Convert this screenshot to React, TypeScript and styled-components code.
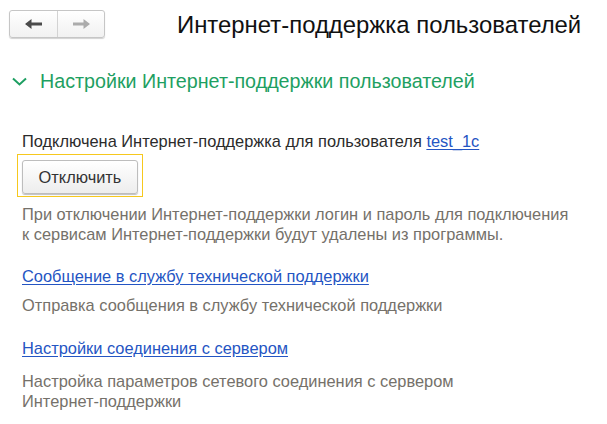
import React from "react";
import styled, { createGlobalStyle } from "styled-components";

const GlobalStyle = createGlobalStyle`
  html, body { margin: 0; padding: 0; background: #ffffff; }
  body { font-family: "Liberation Sans", Arial, sans-serif; color: #333333; }
`;

const Page = styled.div`
  width: 607px;
  height: 424px;
  box-sizing: border-box;
  padding: 10px 0 0 0;
  display: flex;
  flex-direction: column;
  overflow: hidden;
`;

const TopBar = styled.div`
  display: flex;
  align-items: center;
  padding-left: 9px;
  height: 28px;
`;

const NavGroup = styled.div`
  display: flex;
  height: 28px;
  box-sizing: border-box;
  border: 1px solid #c6c6c6;
  border-radius: 3px;
  background: linear-gradient(#ffffff, #f1f1f1);
  box-shadow: 0 1px 1px rgba(0, 0, 0, 0.18);
  overflow: hidden;
`;

const NavButton = styled.button<{ $divider?: boolean }>`
  width: 47px;
  height: 100%;
  border: none;
  padding: 0;
  margin: 0;
  background: transparent;
  display: flex;
  align-items: center;
  justify-content: center;
  border-left: ${(p) => (p.$divider ? "1px solid #d3d3d3" : "none")};
`;

const Title = styled.h1`
  margin: 1px 0 0 72px;
  font-size: 23.9px;
  line-height: 28px;
  font-weight: normal;
  color: #111111;
  white-space: nowrap;
`;

const GroupHeader = styled.div`
  display: flex;
  align-items: center;
  margin-top: 31px;
  padding-left: 12px;
  height: 24px;
  color: #1e9f62;
  font-size: 19.7px;
  line-height: 24px;
  gap: 13px;
`;

const Content = styled.div`
  display: flex;
  flex-direction: column;
  align-items: flex-start;
  padding-left: 22px;
  margin-top: 38px;
`;

const Line = styled.div`
  font-size: 16.4px;
  line-height: 20px;
  color: #2b2b2b;
  white-space: nowrap;
`;

const Link = styled.a<{ $mt?: number }>`
  display: inline-block;
  margin-top: ${(p) => p.$mt ?? 0}px;
  font-size: 16.4px;
  line-height: 20px;
  color: #2455c3;
  text-decoration: underline;
  text-underline-offset: 2px;
  cursor: pointer;
`;

const FocusFrame = styled.div`
  margin: 3px 0 0 -5px;
  border: 1px solid #f6c81e;
  padding: 5px 4px 2px 4px;
  display: flex;
`;

const Button = styled.button`
  width: 116px;
  height: 34px;
  box-sizing: border-box;
  border: 1px solid #bdbdbd;
  border-radius: 3px;
  background: linear-gradient(#ffffff, #ededed);
  box-shadow: 0 1px 1px rgba(0, 0, 0, 0.25);
  font-family: "Liberation Sans", Arial, sans-serif;
  font-size: 16.4px;
  color: #333333;
  padding: 0;
`;

const Hint = styled.div<{ $mt?: number }>`
  margin-top: ${(p) => p.$mt ?? 0}px;
  max-width: 550px;
  font-size: 16.4px;
  line-height: 20px;
  color: #75716a;
`;

const ArrowIcon = ({ dir, color }: { dir: "left" | "right"; color: string }) => (
  <svg width="17" height="10" viewBox="0 0 17 10" style={{ transform: dir === "right" ? "scaleX(-1)" : undefined }}>
    <path d="M0 5 L6.5 0 L6.5 3.4 L17 3.4 L17 6.6 L6.5 6.6 L6.5 10 Z" fill={color} />
  </svg>
);

const Chevron = () => (
  <svg width="15" height="9" viewBox="0 0 15 9">
    <polyline points="1,1.5 7.5,7.5 14,1.5" fill="none" stroke="#1e9f62" strokeWidth="2" />
  </svg>
);

export default function App() {
  return (
    <>
      <GlobalStyle />
      <Page>
        <TopBar>
          <NavGroup>
            <NavButton>
              <ArrowIcon dir="left" color="#4b4b4b" />
            </NavButton>
            <NavButton $divider>
              <ArrowIcon dir="right" color="#acacac" />
            </NavButton>
          </NavGroup>
          <Title>Интернет-поддержка пользователей</Title>
        </TopBar>
        <GroupHeader>
          <Chevron />
          <span>Настройки Интернет-поддержки пользователей</span>
        </GroupHeader>
        <Content>
          <Line>
            Подключена Интернет-поддержка для пользователя <Link>test_1c</Link>
          </Line>
          <FocusFrame>
            <Button>Отключить</Button>
          </FocusFrame>
          <Hint $mt={7}>
            При отключении Интернет‑поддержки логин и пароль для подключения к сервисам Интернет‑поддержки будут удалены из программы.
          </Hint>
          <Link $mt={22}>Сообщение в службу технической поддержки</Link>
          <Hint $mt={9}>Отправка сообщения в службу технической поддержки</Hint>
          <Link $mt={23}>Настройки соединения с сервером</Link>
          <Hint $mt={13}>Настройка параметров сетевого соединения с сервером Интернет‑поддержки</Hint>
        </Content>
      </Page>
    </>
  );
}
